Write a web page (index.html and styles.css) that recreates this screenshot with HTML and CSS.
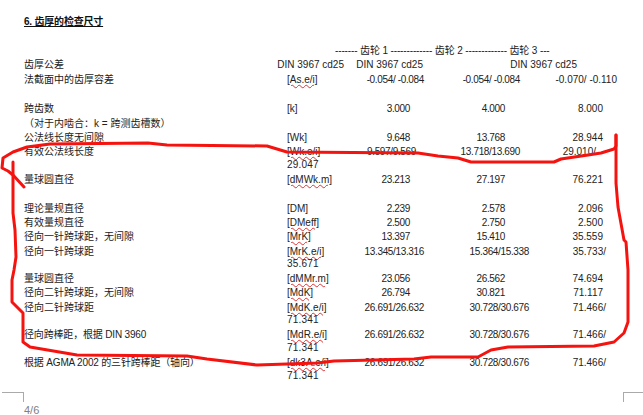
FILE: index.html
```html
<!DOCTYPE html>
<html lang="zh">
<head>
<meta charset="utf-8">
<title>齿厚的检查尺寸</title>
<link rel="stylesheet" href="styles.css">
</head>
<body>
<main class="page">
  <h1 class="title">6. 齿厚的检查尺寸</h1>
  <div class="sheet">
    <div class="gears">------- 齿轮 1 ------------- 齿轮 2 ------------- 齿轮 3 ---</div>

    <div class="din-a">齿厚公差</div><div class="din-b">DIN 3967 cd25</div><div class="din-c">DIN 3967 cd25</div><div class="din-d">DIN 3967 cd25</div>

    <div class="label">法截面中的齿厚容差</div><div class="sym"><span class="sp">[As.e/i]</span></div><div class="c1 full">-0.054/ -0.084</div><div class="c2 mid">-0.054/ -0.084</div><div class="c3 full">-0.070/ -0.110</div>
    <div class="blank"></div>

    <div class="label">跨齿数</div><div class="sym">[k]</div><div class="c1 num">3.000</div><div class="c2 num">4.000</div><div class="c3 num">8.000</div>
    <div class="line">（对于内啮合：k = 跨测齿槽数）</div>
    <div class="label">公法线长度无间隙</div><div class="sym">[Wk]</div><div class="c1 num">9.648</div><div class="c2 num">13.768</div><div class="c3 num">28.944</div>
    <div class="label">有效公法线长度</div><div class="sym"><span class="sp">[Wk.e/i]</span></div><div class="c1 short">9.597/9.569</div><div class="c2 mid">13.718/13.690</div><div class="c3 s1">29.010/</div>
    <div class="wrap">29.047</div>
    <div class="label">量球圆直径</div><div class="sym"><span class="sp">[dMWk.m]</span></div><div class="c1 num">23.213</div><div class="c2 num">27.197</div><div class="c3 num">76.221</div>
    <div class="blank"></div>

    <div class="label">理论量规直径</div><div class="sym">[DM]</div><div class="c1 num">2.239</div><div class="c2 num">2.578</div><div class="c3 num">2.096</div>
    <div class="label">有效量规直径</div><div class="sym"><span class="sp">[DMeff]</span></div><div class="c1 num">2.500</div><div class="c2 num">2.750</div><div class="c3 num">2.500</div>
    <div class="label">径向一针跨球距，无间隙</div><div class="sym"><span class="sp">[MrK]</span></div><div class="c1 num">13.397</div><div class="c2 num">15.410</div><div class="c3 num">35.559</div>
    <div class="label">径向一针跨球距</div><div class="sym"><span class="sp">[MrK.e/i]</span></div><div class="c1 full">13.345/13.316</div><div class="c2 full">15.364/15.338</div><div class="c3 s2">35.733/</div>
    <div class="wrap">35.671</div>
    <div class="label">量球圆直径</div><div class="sym"><span class="sp">[dMMr.m]</span></div><div class="c1 num">23.056</div><div class="c2 num">26.562</div><div class="c3 num">74.694</div>
    <div class="label">径向二针跨球距，无间隙</div><div class="sym"><span class="sp">[MdK]</span></div><div class="c1 num">26.794</div><div class="c2 num">30.821</div><div class="c3 num">71.117</div>
    <div class="label">径向二针跨球距</div><div class="sym"><span class="sp">[MdK.e/i]</span></div><div class="c1 full">26.691/26.632</div><div class="c2 full">30.728/30.676</div><div class="c3 s2">71.466/</div>
    <div class="wrap">71.341</div>
    <div class="label mix">径向跨棒距，根据 DIN 3960</div><div class="sym"><span class="sp">[MdR.e/i]</span></div><div class="c1 full">26.691/26.632</div><div class="c2 full">30.728/30.676</div><div class="c3 s2">71.466/</div>
    <div class="wrap">71.341</div>
    <div class="label mix">根据 AGMA 2002 的三针跨棒距（轴向）</div><div class="sym"><span class="sp">[dk3A.e/i]</span></div><div class="c1 full">26.691/26.632</div><div class="c2 full">30.728/30.676</div><div class="c3 s2">71.466/</div>
    <div class="wrap">71.341</div>
  </div>
  <footer class="foot">
    <div class="marks"><span class="mark-l"></span><span class="mark-r"></span></div>
    <div class="pageno">4/6</div>
  </footer>
  <svg class="ink" viewBox="0 0 643 415" width="643" height="415" aria-hidden="true">
    <path d="M616 135 L616 146 L614 149 L601 153 L588 155 L561 159 L554 162 L471 162 L458 158 L438 156 L418 153 L287 152 L267 146 L167 145 L148 143 L50 144 L27 147 L13 152 L3 158 L2 168 L8 171 L13 175 L24 187"/>
    <path d="M13 162 L13 213 L15 230 L16 257 L14 270 L12 280 L12 302 L23 313 L23 342 L30 347 L77 355 L187 356 L207 359 L257 365 L317 363 L334 361 L414 359 L431 357 L478 357 L491 350 L508 347 L594 346 L614 342 L624 333 L628 322 L628 270 L626 242 L624 240 L618 207 L616 183 L616 135"/>
  </svg>
</main>
</body>
</html>
```
FILE: styles.css
```css
html, body {
  margin: 0;
  padding: 0;
  background: #fff;
}

.page {
  position: relative;
  width: 643px;
  height: 415px;
  overflow: hidden;
  padding-top: 15px;
  box-sizing: border-box;
  font-family: "Liberation Sans", "Noto Sans CJK SC", sans-serif;
  font-size: 10px;
  line-height: 14px;
  color: #222;
}

.title {
  margin: 0 0 15px 24px;
  font-size: 10px;
  line-height: 14px;
  font-weight: bold;
  letter-spacing: -0.2px;
  color: #111;
  text-decoration: underline;
  white-space: nowrap;
}

.sheet {
  display: grid;
  grid-template-columns: 24px 263px 58px 79px 105px 88px;
  grid-template-rows: 14px 15px 15px 14px 15px 14px 14px 13px 15px 15px 14px 14px 14px 15px 12px 15px 14px 15px 12px 15px 13px 15px 13px 14px;
  white-space: nowrap;
}

.sheet > div {
  height: 14px;
}

.gears {
  grid-column: 3 / 7;
  padding-left: 48px;
  letter-spacing: -0.13px;
}

.din-a, .label {
  grid-column: 2;
}

.label.mix {
  letter-spacing: -0.17px;
}

.din-b {
  grid-column: 3;
  justify-self: end;
  padding-right: 1px;
}

.din-c {
  grid-column: 4;
  text-align: right;
  padding-right: 1px;
}

.din-d {
  grid-column: 5 / 7;
  text-align: right;
  padding-right: 40px;
}

.sym {
  grid-column: 3;
}

.sp {
  text-decoration: underline wavy #d33 1px;
  text-underline-offset: 1px;
}

.c1 { grid-column: 4; text-align: right; letter-spacing: -0.35px; }
.c2 { grid-column: 5; text-align: right; letter-spacing: -0.35px; }
.c3 { grid-column: 6; text-align: right; }

.c1.num, .c3.num { padding-right: 14px; }
.c2.num { padding-right: 24px; }
.c1.short { padding-right: 8px; }
.c2.mid { padding-right: 9px; }
.c3.s1 { padding-right: 21px; }
.c3.s2 { padding-right: 11px; }

.blank {
  grid-column: 1 / -1;
}

.line {
  grid-column: 2 / -1;
}

.wrap {
  grid-column: 3 / -1;
  letter-spacing: 0.2px;
}

.foot {
  margin-top: 9px;
}

.marks {
  display: flex;
  justify-content: space-between;
}

.mark-l, .mark-r {
  height: 9px;
  border-top: 1px solid #aaa;
}

.mark-l {
  width: 21px;
  margin-left: 2px;
  border-right: 1px solid #aaa;
}

.mark-r {
  width: 19px;
  border-left: 1px solid #aaa;
}

.pageno {
  margin: 1px 0 0 24px;
  font-size: 11px;
  color: #808080;
}

.ink {
  position: absolute;
  left: 0;
  top: 0;
  pointer-events: none;
}

.ink path {
  fill: none;
  stroke: #f5130f;
  stroke-width: 3;
  stroke-linejoin: round;
  stroke-linecap: round;
}
```
